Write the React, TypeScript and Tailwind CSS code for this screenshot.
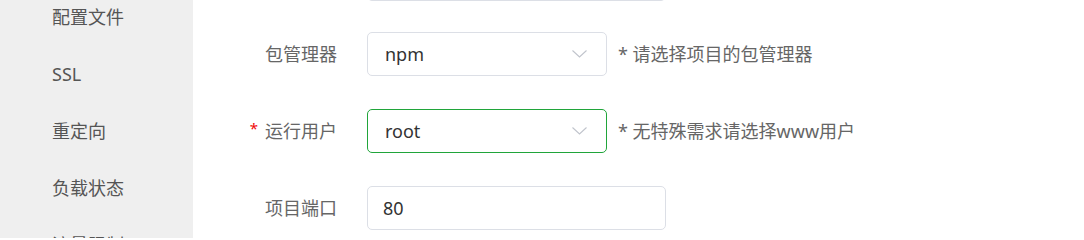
import React from "react";

const FONT = { fontFamily: '"Noto Sans", "Noto Sans CJK SC", sans-serif' };

const MENU = ["配置文件", "SSL", "重定向", "负载状态", "流量限制"];

const Chevron = () => (
  <svg
    width="15"
    height="8"
    viewBox="0 0 15 8"
    fill="none"
    stroke="#c0c4cc"
    strokeWidth="1.1"
    className="shrink-0"
  >
    <path d="M0.5 0.5 L7.5 7 L14.5 0.5" />
  </svg>
);

type RowProps = {
  label?: string;
  required?: boolean;
  children: React.ReactNode;
  hint?: string;
  className?: string;
};

const Row = ({ label, required, children, hint, className }: RowProps) => (
  <div className={"flex items-center h-[44px] shrink-0 " + (className ?? "")}>
    <div className="w-[144px] flex justify-end items-center text-[18px] text-[#666]">
      {required && (
        <span className="text-[#ef0808] text-[15px] mr-[7px] -mt-[6px]">*</span>
      )}
      {label && <span>{label}</span>}
    </div>
    <div className="ml-[30px] flex items-center h-full">{children}</div>
    {hint && (
      <span className="ml-[11px] text-[18px] text-[#666] whitespace-nowrap">
        {hint}
      </span>
    )}
  </div>
);

const Select = ({ value, active }: { value: string; active?: boolean }) => (
  <div
    className={
      "w-[240px] h-[44px] rounded-[5px] border bg-white flex items-center justify-between pl-[17px] pr-[19px] " +
      (active ? "border-[#20a53a]" : "border-[#dcdfe6]")
    }
  >
    <span className="text-[18px] text-[#333]">{value}</span>
    <Chevron />
  </div>
);

const Input = ({ value }: { value: string }) => (
  <div className="w-[299px] h-[44px] rounded-[5px] border border-[#dcdfe6] bg-white flex items-center pl-[15px]">
    <span className="text-[18px] text-[#333]">{value}</span>
  </div>
);

export default function App() {
  return (
    <div className="w-[1084px] h-[238px] flex overflow-hidden bg-white" style={FONT}>
      <aside className="w-[193px] shrink-0 bg-[#efefef] flex flex-col -mt-[11px]">
        {MENU.map((m) => (
          <div
            key={m}
            className="h-[57px] shrink-0 flex items-center pl-[52px] text-[18px] text-[#555]"
          >
            {m}
          </div>
        ))}
      </aside>
      <main className="flex-1 flex flex-col gap-[33px] -mt-[43px]">
        <Row className="-mb-[2px]">
          <Input value="" />
        </Row>
        <Row label="包管理器" hint="* 请选择项目的包管理器">
          <Select value="npm" />
        </Row>
        <Row label="运行用户" required hint="* 无特殊需求请选择www用户">
          <Select value="root" active />
        </Row>
        <Row label="项目端口">
          <Input value="80" />
        </Row>
      </main>
    </div>
  );
}
